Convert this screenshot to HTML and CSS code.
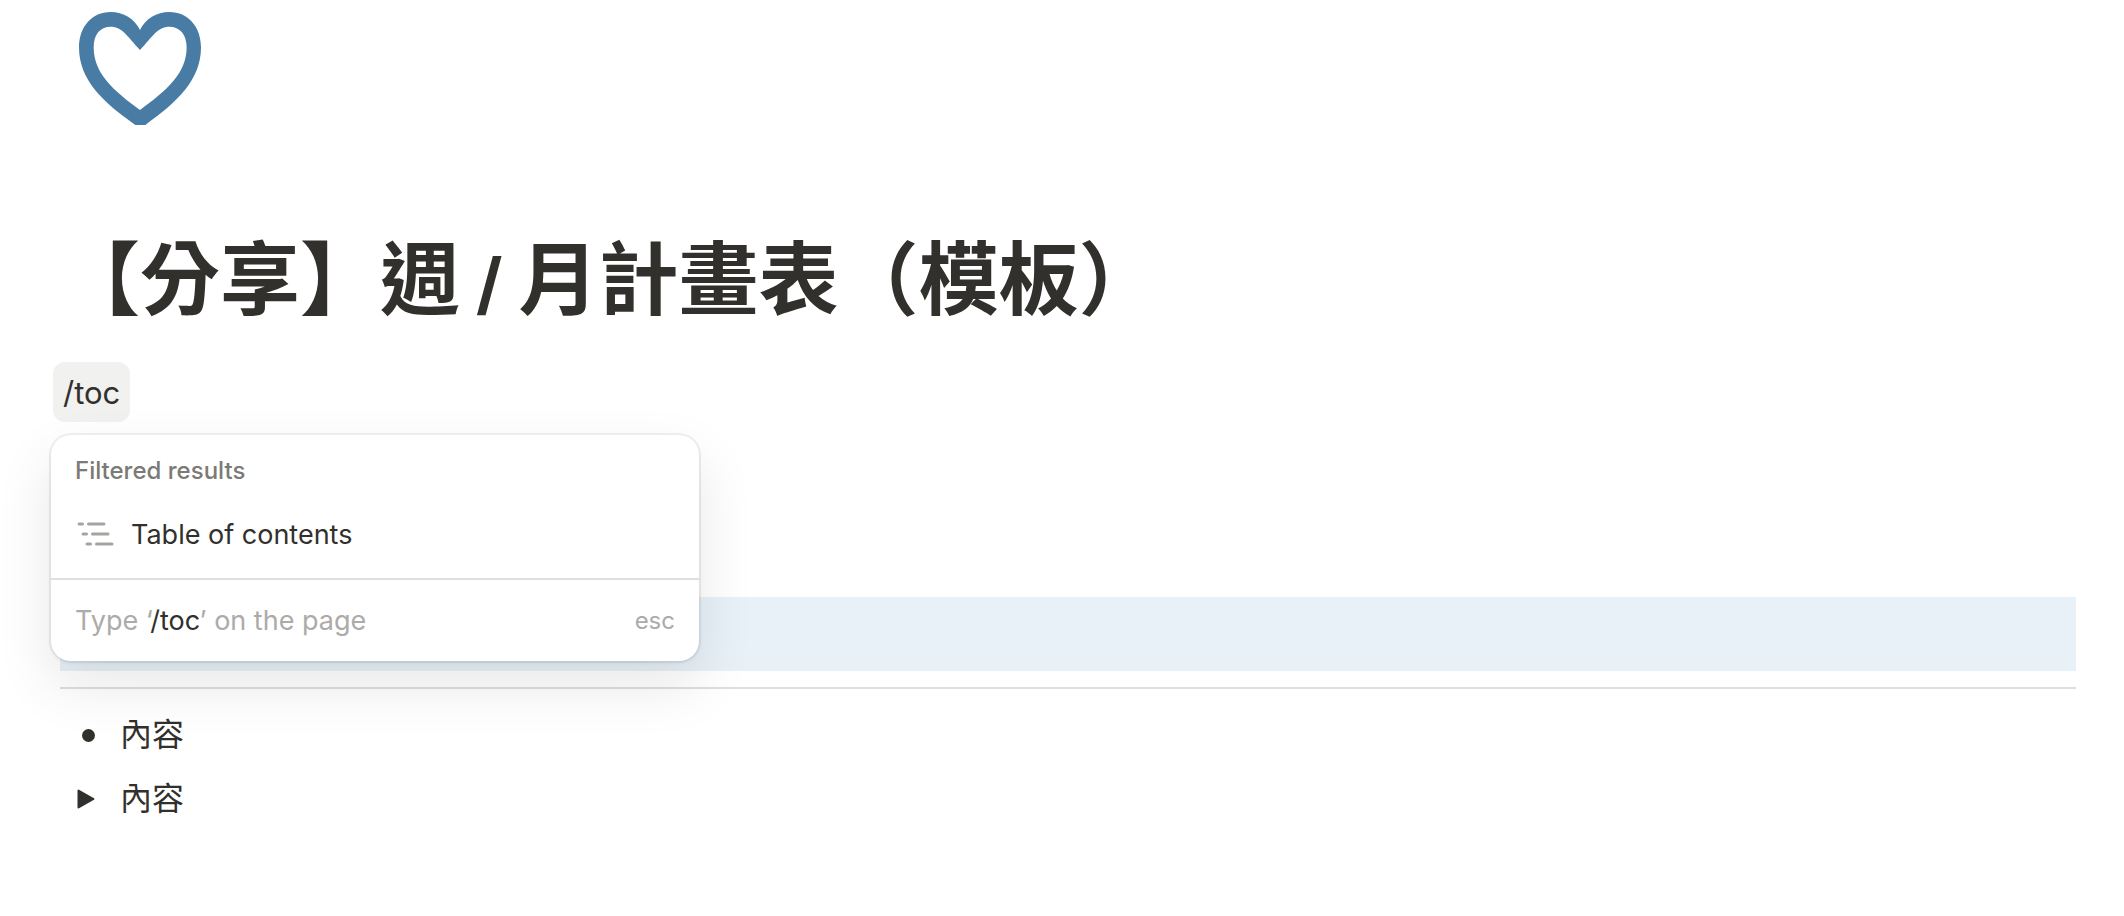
FILE: index.html
```html
<!DOCTYPE html>
<html lang="zh-Hant">
<head>
<meta charset="utf-8">
<meta name="viewport" content="width=device-width, initial-scale=1">
<title>【分享】週 / 月計畫表（模板）</title>
<link rel="stylesheet" href="styles.css">
</head>
<body>
<main class="page">
  <svg class="page-icon" viewBox="117 36 366 339" role="img" aria-label="Heart">
    <path fill="currentColor" fill-rule="evenodd" d="M300 90C316 56 350 36 388 36C444 36 483 80 483 142C483 240 412 306 316 375H286C188 306 117 240 117 142C117 80 156 36 212 36C250 36 284 56 300 90ZM300 150C338 109 353 80 388 80C420 80 440 104 440 142C440 220 380 272 300 330C220 272 161 220 161 142C161 104 180 80 212 80C247 80 262 109 300 150Z"/>
  </svg>
  <h1 class="title">【分享】週<span class="title-slash"> / </span>月計畫表（模板）</h1>

  <div class="command">
    <input class="command-input" type="text" value="/toc" aria-label="Block command">
    <div class="menu">
      <section class="menu-results">
        <h2 class="menu-heading">Filtered results</h2>
        <button class="menu-item" type="button">
          <svg class="menu-icon" viewBox="0 0 40 40" aria-hidden="true">
            <path d="M4 9H7.500M13.500 9H29M8 19H11.500M17.500 19H33M12 29H15.500M21.500 29H37"/>
          </svg>
          <span>Table of contents</span>
        </button>
      </section>
      <button class="menu-footer" type="button">
        <span>Type ‘<span class="typed">/toc</span>’ on the page</span>
        <kbd class="key">esc</kbd>
      </button>
    </div>
  </div>

  <div class="callout"></div>
  <hr class="divider">
  <ul class="list">
    <li class="row"><span class="bullet"></span>內容</li>
    <li class="row">
      <button class="toggle" type="button" aria-label="Toggle">
        <svg class="toggle-icon" viewBox="0 0 18 20" aria-hidden="true"><path d="M1.500 1.500V18.500L16.500 10Z"/></svg>
      </button>內容
    </li>
  </ul>
</main>
</body>
</html>
```

FILE: styles.css
```css
* {
  box-sizing: border-box;
}

body {
  margin: 0;
  background: #fff;
  color: #32302c;
  font-family: Inter, "Noto Sans CJK TC", sans-serif;
  font-size: 32px;
  line-height: 48px;
}

button {
  border: 0;
  background: none;
  color: inherit;
  font: inherit;
  text-align: left;
  cursor: pointer;
}

.page {
  padding: 12px 48px 48px 60px;
}

.page-icon {
  display: block;
  width: 122px;
  height: 113px;
  margin-left: 19px;
  color: #487ca5;
}

.title {
  margin: 106px 0 0;
  font-size: 80px;
  font-weight: 700;
  line-height: 96px;
}

.title-slash {
  font-size: 68px;
  line-height: 1;
}

.command {
  position: relative;
  margin: 35px 0 0 -7px;
}

.command-input {
  display: block;
  width: 77px;
  height: 60px;
  padding: 0 10px;
  border: 0;
  border-radius: 12px;
  outline: 0;
  background: #f1f1ef;
  color: inherit;
  font: inherit;
  font-size: 31px;
}

.menu {
  position: absolute;
  top: 73px;
  left: -2px;
  z-index: 1;
  width: 648px;
  border-radius: 20px;
  background: #fff;
  box-shadow:
    0 0 0 2px rgba(15, 15, 15, 0.06),
    0 2px 4px rgba(15, 15, 15, 0.05),
    0 24px 56px rgba(15, 15, 15, 0.1);
  font-size: 27px;
  line-height: 36px;
}

.menu-results {
  padding: 20px 0 11px;
  border-bottom: 2px solid #dededd;
}

.menu-heading {
  margin: 0;
  padding: 0 24px;
  color: #7b7a76;
  font-size: 24px;
  font-weight: 500;
  line-height: 32px;
}

.menu-item {
  display: flex;
  align-items: center;
  gap: 16px;
  width: 100%;
  height: 64px;
  margin-top: 16px;
  padding: 0 24px;
}

.menu-icon {
  width: 40px;
  height: 40px;
  fill: none;
  stroke: #a5a4a1;
  stroke-width: 3;
  stroke-linecap: round;
}

.menu-footer {
  display: flex;
  align-items: center;
  justify-content: space-between;
  width: 100%;
  height: 81px;
  padding: 0 24px;
  color: #acaba9;
}

.typed {
  color: #32302c;
}

.key {
  font-family: inherit;
  font-size: 24px;
}

.callout {
  height: 74px;
  margin-top: 175px;
  background: #e8f1f8;
}

.divider {
  height: 2px;
  margin: 16px 0 0;
  border: 0;
  background: #dededd;
}

.list {
  margin: 14px 0 0;
  padding: 0;
  list-style: none;
}

.row {
  display: flex;
  align-items: center;
  height: 64px;
}

.bullet {
  width: 13px;
  height: 13px;
  margin: 0 25px 0 22px;
  border-radius: 50%;
  background: currentColor;
}

.toggle {
  display: flex;
  align-items: center;
  width: 60px;
  height: 48px;
  padding: 0 0 0 17px;
}

.toggle-icon {
  width: 18px;
  height: 20px;
  fill: currentColor;
  stroke: currentColor;
  stroke-width: 2;
  stroke-linejoin: round;
}
```
